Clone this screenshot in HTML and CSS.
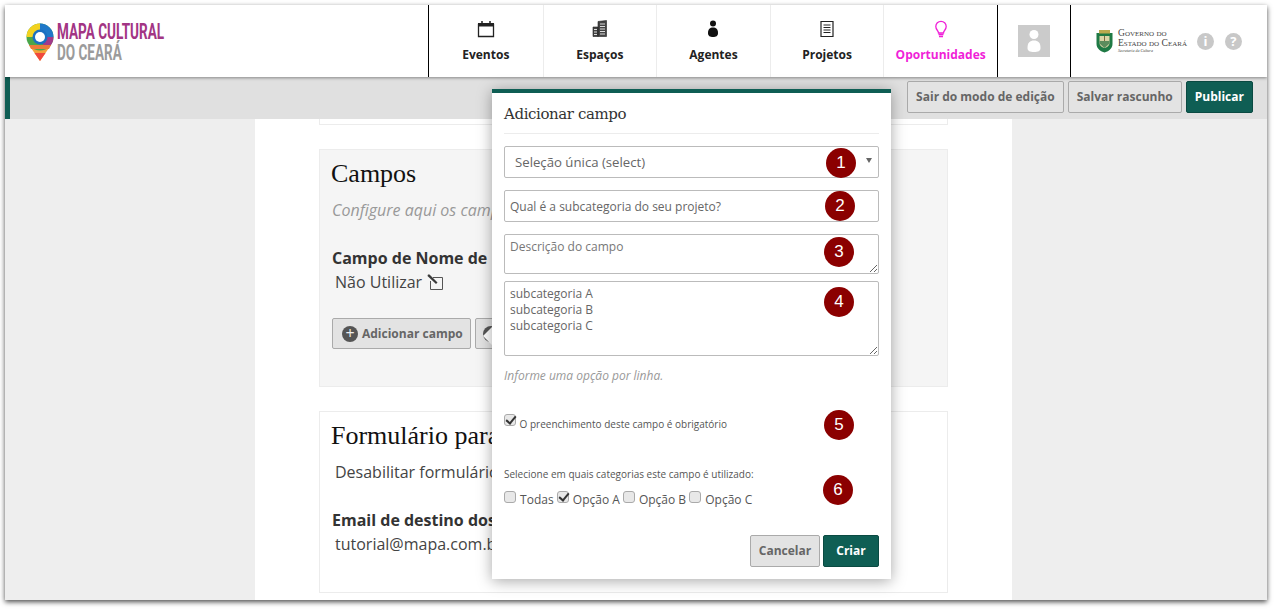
FILE: index.html
```html
<!DOCTYPE html>
<html lang="pt-BR">
<head>
<meta charset="utf-8">
<title>Mapa Cultural do Ceará</title>
<link rel="stylesheet" href="styles.css">
</head>
<body>
<div class="window">
  <header class="header">
    <a class="logo">
      <svg class="logo-pin" width="28" height="38" viewBox="0 0 28 38">
        <path d="M14 38 L3 22 H25 Z" fill="#f2a33a"/>
        <path d="M14 38 L8.5 30 H19.5 Z" fill="#f0483e"/>
        <circle cx="14" cy="14" r="13.5" fill="#4aa64a"/>
        <path d="M14 .5 A13.5 13.5 0 0 1 27.500 14 L20 14 A6 6 0 0 0 14 8 Z" fill="#1f78c8"/>
        <path d="M.5 14 A13.500 13.500 0 0 1 14 .5 L14 8 A6 6 0 0 0 8 14 Z" fill="#f3d21f"/>
        <path d="M27.500 14 A13.500 13.500 0 0 1 20 26 L16 20 A6 6 0 0 0 20 14 Z" fill="#a23a8a"/>
        <path d="M3 22 H25 L23 26 H5 Z" fill="#ec7b3a"/>
        <circle cx="14" cy="14" r="7.500" fill="#1b6fc0"/>
        <circle cx="14" cy="14" r="5" fill="#fff"/>
      </svg>
      <span class="logo-text">
        <span class="logo-top">MAPA CULTURAL</span>
        <span class="logo-bottom">DO CEARÁ</span>
      </span>
    </a>
    <nav class="nav">
      <a class="nav-item">
        <svg width="18" height="18" viewBox="0 0 18 18"><path d="M1.500 4.500H16.500V16.500H1.500Z" fill="none" stroke="#222" stroke-width="1.300"/><path d="M1 3H17V6.500H1Z" fill="#222"/><path d="M5 1V4.500M13 1V4.500" stroke="#222" stroke-width="1.500"/></svg>
        <span>Eventos</span>
      </a>
      <a class="nav-item">
        <svg width="18" height="18" viewBox="0 0 18 18"><path d="M7 1.500 15.500 0.500V16.500H7Z M2 7H7V16.500H2Z" fill="#444" stroke="#222" stroke-width=".6"/><path d="M9 4H14M9 6.500H14M9 9H14M9 11.500H14M9 14H14M3 9.500H6M3 12H6M3 14.500H6" stroke="#ddd" stroke-width="1"/></svg>
        <span>Espaços</span>
      </a>
      <a class="nav-item">
        <svg width="18" height="18" viewBox="0 0 18 18"><circle cx="9" cy="3.500" r="3" fill="#111"/><path d="M4 13C4 9 6 7.500 9 7.500S14 9 14 13C14 16 12 17 9 17S4 16 4 13Z" fill="#111"/></svg>
        <span>Agentes</span>
      </a>
      <a class="nav-item">
        <svg width="18" height="18" viewBox="0 0 18 18"><path d="M3 1.500H15V16.500H3Z" fill="none" stroke="#222" stroke-width="1.200"/><path d="M5.500 5H12.500M5.500 7.500H12.500M5.500 10H12.500M5.500 12.500H12.500" stroke="#222" stroke-width="1"/></svg>
        <span>Projetos</span>
      </a>
      <a class="nav-item nav-item-active">
        <svg width="18" height="18" viewBox="0 0 18 18"><path d="M6.500 13C6.500 10.500 3.800 9.800 3.800 6.500A5.200 5.200 0 0 1 14.200 6.500C14.200 9.800 11.500 10.500 11.500 13Z" fill="none" stroke="#f01fd8" stroke-width="1.300"/><path d="M6.500 14.500H11.500M7 16.500H11" stroke="#f01fd8" stroke-width="1.300"/></svg>
        <span>Oportunidades</span>
      </a>
    </nav>
    <div class="avatar-cell">
      <div class="avatar">
        <svg width="32" height="32" viewBox="0 0 32 32"><circle cx="16" cy="9.500" r="4.500" fill="#fff"/><path d="M9.500 23C9.500 17.500 12 15.500 16 15.500S22.500 17.500 22.500 23C22.500 26 20 27 16 27S9.500 26 9.500 23Z" fill="#fff"/></svg>
      </div>
    </div>
    <div class="gov">
      <svg width="19" height="24" viewBox="0 0 19 24"><path d="M1.500 4H17.500V15C17.500 20 13 22.500 9.500 23.500 6 22.500 1.500 20 1.500 15Z" fill="#1f7a45"/><path d="M4.500 7H14.500V14C14.500 17 11.500 18.500 9.500 19 7.500 18.500 4.500 17 4.500 14Z" fill="#d9d4a6"/><path d="M4 1H15V4.500H4Z" fill="#b9a94e"/><path d="M4.500 12H14.500V14.500L9.500 19 4.500 14.500Z" fill="#5c8c5c"/><path d="M9.500 7V12" stroke="#7a6a3a"/></svg>
      <div class="gov-text">
        <span class="gov-line">Governo do</span>
        <span class="gov-line">Estado do Ceará</span>
        <span class="gov-sub">Secretaria da Cultura</span>
      </div>
      <span class="round-icon">i</span>
      <span class="round-icon">?</span>
    </div>
  </header>
  <div class="toolbar">
    <button class="btn">Sair do modo de edição</button>
    <button class="btn">Salvar rascunho</button>
    <button class="btn btn-primary">Publicar</button>
  </div>
  <main class="content">
    <div class="column">
      <div class="card card-stub"></div>
      <section class="card card-grey">
        <h3 class="card-title">Campos</h3>
        <p class="hint">Configure aqui os campos do formulário</p>
        <p class="label">Campo de Nome de projeto</p>
        <p class="value">Não Utilizar
          <svg class="edit" width="16" height="16" viewBox="0 0 16 16"><path d="M6 3.500H15.500V15.500H3.500V7" fill="none" stroke="#555" stroke-width="1"/><path d="M1 .5 2.500 .5 10.500 8.500 9 10 .5 2Z" fill="#3a3a3a"/></svg>
        </p>
        <div class="card-actions">
          <button class="btn btn-icon"><span class="plus">+</span>Adicionar campo</button>
          <button class="btn btn-tab"><span class="tab-arrow"></span></button>
        </div>
      </section>
      <section class="card card-form">
        <h3 class="card-title">Formulário para</h3>
        <p class="value value-first">Desabilitar formulário</p>
        <p class="label label-mail">Email de destino dos formulários</p>
        <p class="value">tutorial@mapa.com.br</p>
      </section>
    </div>
  </main>
  <form class="modal">
    <h2 class="modal-title">Adicionar campo</h2>
    <div class="select">
      <span>Seleção única (select)</span>
      <span class="caret"></span>
    </div>
    <input class="input" type="text" value="Qual é a subcategoria do seu projeto?">
    <textarea class="input area-small" placeholder="Descrição do campo"></textarea>
    <textarea class="input area-large">subcategoria A
subcategoria B
subcategoria C</textarea>
    <p class="modal-hint">Informe uma opção por linha.</p>
    <label class="check-required"><input type="checkbox" checked> O preenchimento deste campo é obrigatório</label>
    <p class="cat-title">Selecione em quais categorias este campo é utilizado:</p>
    <div class="cats">
      <label><input type="checkbox"> Todas</label>
      <label><input type="checkbox" checked> Opção A</label>
      <label><input type="checkbox"> Opção B</label>
      <label><input type="checkbox"> Opção C</label>
    </div>
    <div class="modal-actions">
      <button type="button" class="btn btn-cancel">Cancelar</button>
      <button type="button" class="btn btn-primary btn-create">Criar</button>
    </div>
    <span class="pin pin-1">1</span>
    <span class="pin pin-2">2</span>
    <span class="pin pin-3">3</span>
    <span class="pin pin-4">4</span>
    <span class="pin pin-5">5</span>
    <span class="pin pin-6">6</span>
  </form>
</div>
</body>
</html>
```
FILE: styles.css
```css
* { box-sizing: border-box; }
html, body { margin: 0; height: 609px; overflow: hidden; background: #fff; }
body { position: relative; padding: 5px 8px 0 5px; font-family: "Open Sans", "Noto Sans", sans-serif; color: #333; }
p, h2, h3 { margin: 0; font-weight: normal; }

.window { position: relative; height: 595px; background: #eee; overflow: hidden; box-shadow: 0 2px 5px rgba(0,0,0,.7); }

.header { display: flex; height: 72px; background: #fff; box-shadow: 0 1px 3px rgba(0,0,0,.4); position: relative; z-index: 2; }
.logo { display: flex; align-items: flex-start; width: 423px; padding: 18px 0 0 21px; }
.logo-pin { flex: none; }
.logo-text { display: flex; flex-direction: column; margin: -2px 0 0 3px; font-family: "Roboto", sans-serif; font-weight: 700; font-size: 22px; line-height: 21px; transform-origin: 0 0; transform: scaleX(.615); white-space: nowrap; }
.logo-top { color: #a23584; }
.logo-bottom { color: #9b9b9b; }

.nav { display: flex; border-left: 1px solid #000; border-right: 1px solid #000; }
.nav-item { width: 113.600px; display: flex; flex-direction: column; align-items: center; padding-top: 15px; border-right: 1px solid #ececec; font-size: 12px; font-weight: 700; color: #222; }
.nav-item:first-child { width: 114.600px; }
.nav-item:last-child { width: 112.600px; border-right: 0; }
.nav-item svg { height: 18px; margin-bottom: 8px; }
.nav-item span { line-height: 18px; }
.nav-item-active { color: #f01fd8; }

.avatar-cell { width: 73px; border-right: 1px solid #000; display: flex; justify-content: center; padding-top: 20px; }
.avatar { width: 32px; height: 32px; background: #cbcbcb; }

.gov { display: flex; align-items: center; flex: 1; padding-left: 24px; }
.gov-text { display: flex; flex-direction: column; margin-left: 4px; font-family: "Liberation Serif", serif; font-variant: small-caps; color: #444; width: 67px; white-space: nowrap; }
.gov-line { font-size: 9.600px; line-height: 10px; }
.gov-sub { font-size: 4px; line-height: 6px; font-variant: normal; font-style: italic; }
.round-icon { width: 17px; height: 17px; border-radius: 50%; background: #c8c8c8; color: #fff; font-size: 13px; font-weight: 700; line-height: 17px; text-align: center; margin-left: 11px; }
.gov-text + .round-icon { margin-left: 12px; }

.toolbar { display: flex; justify-content: flex-end; gap: 4px; height: 42px; padding: 4px 14px 0 0; background: #e0e0e0; border-left: 5px solid #0f5e54; }
.btn { height: 32px; padding: 0 8px; border: 1px solid #aaa; border-radius: 2px; background: #e3e3e3; color: #666; font: 700 12px/18px "Open Sans", sans-serif; white-space: nowrap; }
.btn-primary { background: #0f5e54; border-color: #0a4a42; color: #fff; }

.content { height: 481px; display: flex; padding-left: 250px; }
.column { width: 757px; height: 100%; background: #fff; padding: 0 64px; }
.card { width: 629px; border: 1px solid #ececec; padding: 12px; background: #fff; }
.card + .card { margin-top: 24px; }
.card-stub { height: 6px; border-top: 0; padding: 0; }
.card-grey { background: #f5f5f5; height: 238px; }
.card-form { height: 182px; }
.card-title { margin-left: -1px; font: 400 26px/24px "Liberation Serif", serif; color: #111; white-space: nowrap; }
.hint { margin-top: 14px; font-size: 16px; font-style: italic; line-height: 20px; color: #999; white-space: nowrap; }
.label { margin-top: 27px; font-size: 16px; font-weight: 700; line-height: 22px; color: #333; white-space: nowrap; }
.value { margin-left: 3px; font-size: 16px; line-height: 22px; margin-top: 2px; color: #444; white-space: nowrap; }
.edit { vertical-align: -2px; margin-left: 1px; }
.card-actions { display: flex; gap: 4px; margin-top: 25px; }
.card-actions .btn { height: 31px; }
.btn-icon { display: flex; align-items: center; gap: 4px; padding: 0 7px 0 9px; }
.plus { display: block; width: 16px; height: 16px; border-radius: 50%; background: #555; color: #eee; font-size: 16px; font-weight: 400; line-height: 15px; text-align: center; }
.btn-tab { position: relative; width: 40px; overflow: hidden; }
.tab-arrow { position: absolute; left: 7px; top: 7px; width: 16px; height: 16px; border-radius: 50%; background: #555; }
.tab-arrow::after { content: ""; position: absolute; left: 0; top: 0; border: 10px solid transparent; border-right-color: #fff; border-left: 0; }
.value-first { margin-top: 13px; }
.label-mail { margin-top: 26px; }

.modal { position: absolute; left: 487px; top: 84px; width: 399px; height: 490px; padding: 11px 12px 0; background: #fff; border-top: 4px solid #0f5e54; box-shadow: 0 2px 14px rgba(0,0,0,.35); z-index: 3; display: flex; flex-direction: column; align-items: stretch; }
.modal-title { font: 400 15px/20px "DejaVu Serif", serif; letter-spacing: -.4px; color: #333; padding-bottom: 9px; border-bottom: 1px solid #ececec; }
.select { display: flex; justify-content: space-between; align-items: center; height: 32px; margin-top: 12px; padding: 0 6px 0 10px; border: 1px solid #bbb; border-radius: 2px; font-size: 13.200px; color: #666; }
.caret { border: 3px solid transparent; border-top: 5px solid #666; border-bottom: 0; margin-top: -3px; }
.input { display: block; width: 100%; margin: 12px 0 0; padding: 4px 5px; border: 1px solid #bbb; border-radius: 2px; background: #fff; font: 12px/16px "Open Sans", sans-serif; color: #666; }
.input::placeholder { color: #777; opacity: 1; }
input.input { height: 32px; padding-top: 0; padding-bottom: 0; }
.area-small { height: 40px; }
.area-large { height: 75px; margin-top: 7px; }
.modal-hint { margin-top: 12px; font-size: 12px; font-style: italic; line-height: 16px; color: #999; }
.check-required { display: block; margin-top: 30px; font-size: 10px; line-height: 16px; color: #555; }
.check-required input, .cats input { appearance: none; position: relative; margin: 0 1px 0 0; vertical-align: 2px; width: 12px; height: 12px; border: 1px solid #aaa; border-radius: 3px; background: #e8e8e8; }
.cats input { vertical-align: 1px; }
.check-required input:checked::before, .cats input:checked::before { content: ""; position: absolute; left: 1px; top: 1px; width: 8px; height: 4px; border-left: 2px solid #333; border-bottom: 2px solid #333; transform: rotate(-50deg); }
.cat-title { margin-top: 35px; font-size: 10px; line-height: 14px; color: #555; }
.cats { display: flex; gap: 3px; margin-top: 10px; font-size: 12px; line-height: 18px; color: #555; }
.modal-actions { display: flex; justify-content: flex-end; gap: 3px; margin-top: 26px; }
.btn-cancel { width: 70px; padding: 0; }
.btn-create { width: 56px; padding: 0; }

.pin { position: absolute; width: 30px; height: 30px; border-radius: 50%; background: #8b0000; color: #fff; font: 17px/29px "Liberation Sans", sans-serif; text-align: center; }
.pin-1 { left: 334px; top: 55px; }
.pin-2 { left: 333px; top: 98px; }
.pin-3 { left: 332px; top: 144px; }
.pin-4 { left: 332px; top: 194px; }
.pin-5 { left: 332px; top: 317px; }
.pin-6 { left: 331px; top: 382px; }
```
